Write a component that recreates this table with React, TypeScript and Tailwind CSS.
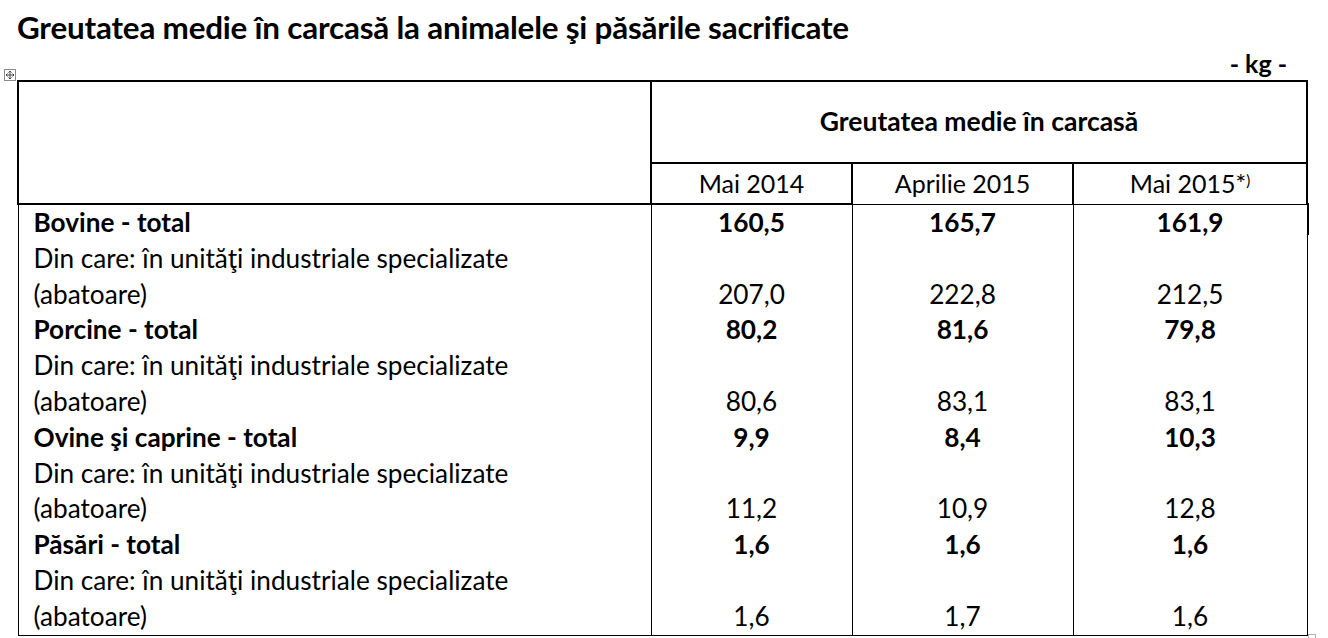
const rows = [
  { label: "Bovine - total", values: ["160,5", "165,7", "161,9"], bold: true },
  { label: "abatoare", values: ["207,0", "222,8", "212,5"] },
  { label: "Porcine - total", values: ["80,2", "81,6", "79,8"], bold: true },
  { label: "abatoare", values: ["80,6", "83,1", "83,1"] },
  { label: "Ovine şi caprine - total", values: ["9,9", "8,4", "10,3"], bold: true },
  { label: "abatoare", values: ["11,2", "10,9", "12,8"] },
  { label: "Păsări - total", values: ["1,6", "1,6", "1,6"], bold: true },
  { label: "abatoare", values: ["1,6", "1,7", "1,6"] },
];

function MoveHandle() {
  return (
    <div className="absolute left-[4px] top-[69px] flex h-[12px] w-[12px] items-center justify-center border border-[#8a8a8a] bg-white">
      <svg width="10" height="10" viewBox="0 0 10 10" fill="none" stroke="#444" strokeWidth="1">
        <path d="M5 1v8M1 5h8" />
        <path d="M3.5 2.5L5 1l1.5 1.5M3.5 7.5L5 9l1.5-1.5M2.5 3.5L1 5l1.5 1.5M7.5 3.5L9 5l-1.5 1.5" />
      </svg>
    </div>
  );
}

export default function App() {
  return (
    <div className="relative h-[638px] w-[1328px] overflow-hidden bg-white text-black" style={{ fontFamily: "Lato, 'Open Sans', sans-serif" }}>
      <h1 className="pl-[17px] pt-[8px] text-[31.4px] font-bold leading-[38px] tracking-[-0.2px]">
        Greutatea medie în carcasă la animalele şi păsările sacrificate
      </h1>
      <div className="pr-[41px] text-right text-[25px] font-bold leading-[34px]">- kg -</div>
      <MoveHandle />

      <table className="ml-[17px] w-[1289px] table-fixed border-collapse text-[26.2px]">
        <colgroup>
          <col className="w-[633px]" />
          <col className="w-[201px]" />
          <col className="w-[221px]" />
          <col className="w-[234px]" />
        </colgroup>
        <thead>
          <tr className="h-[82px]">
            <th rowSpan={2} className="border-2 border-black" />
            <th colSpan={3} className="border-2 border-black text-center text-[26.5px] font-bold">
              Greutatea medie în carcasă
            </th>
          </tr>
          <tr className="h-[41px] text-[25px] font-normal">
            <th className="border-2 border-black font-normal">Mai 2014</th>
            <th className="border-2 border-b border-black font-normal">Aprilie 2015</th>
            <th className="border-2 border-b border-black font-normal">
              Mai 2015*<sup className="text-[15px]">)</sup>
            </th>
          </tr>
        </thead>
        <tbody className="leading-[35.8px]">
          {rows.map((r, i) =>
            r.bold ? (
              <tr key={i}>
                <td className="border-x border-black pl-[15px] font-bold">{r.label}</td>
                {r.values.map((v, j) => (
                  <td key={j} className="border-x border-black text-center font-bold">{v}</td>
                ))}
              </tr>
            ) : (
              <tr key={i} className={i === rows.length - 1 ? "border-b border-black" : ""}>
                <td className="border-x border-black pl-[15px]">
                  Din care: în unităţi industriale specializate
                  <br />
                  (abatoare)
                </td>
                {r.values.map((v, j) => (
                  <td key={j} className="border-x border-black text-center align-bottom">{v}</td>
                ))}
              </tr>
            )
          )}
        </tbody>
      </table>

      <div className="absolute left-[1308px] top-[203px] h-[32px] w-px bg-black" />
      <div className="absolute left-[1308px] top-[634px] h-[8px] w-[8px] border border-[#b0b0b0]" />
    </div>
  );
}
